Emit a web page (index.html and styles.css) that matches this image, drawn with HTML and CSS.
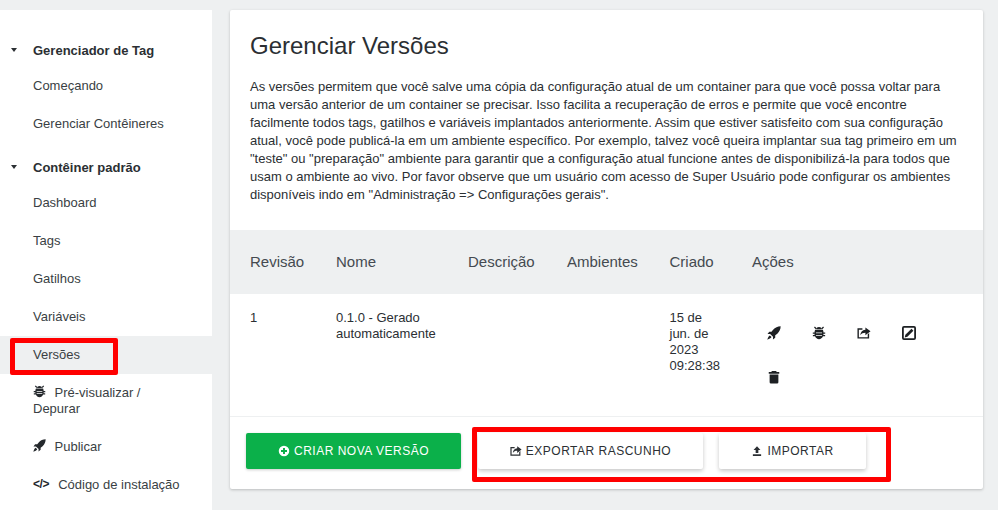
FILE: index.html
```html
<!DOCTYPE html>
<html lang="pt">
<head>
<meta charset="utf-8">
<title>Gerenciar Versões</title>
<link rel="stylesheet" href="styles.css">
</head>
<body>
<svg class="defs" width="0" height="0" aria-hidden="true">
  <symbol id="i-rocket" viewBox="0 0 16 16"><path d="M15.6.4C12.2.5 9.3 1.700 7 4.200 6.300 5 5.700 5.800 5.200 6.500H2.600L.6 9.200l3-.1 3.300 3.300-.1 2.900 2.600-2V10.700c.8-.5 1.600-1.100 2.400-1.800 2.500-2.300 3.700-5.100 3.800-8.500zM3.300 10.800C2 11.300 1 13.500.4 15.600 2.500 15 4.700 14 5.200 12.700z"/></symbol>
  <symbol id="i-bug" viewBox="0 0 16 16"><path d="M5 3.700C5 2.100 6.300 1.100 8 1.100s3 1 3 2.600zM2.300 1.600l1-1 2 2-1 1zM13.700 1.600l-1-1-2 2 1 1z"/><path d="M3.600 4.400h8.800c.5 1 .7 2 .7 3h2v1.400h-2c0 .6 0 1-.1 1.500h2v1.400h-2.500C11.800 13.500 10 15.200 8 15.200s-3.800-1.700-4.500-3.500H1v-1.400h2c-.1-.5-.1-.9-.1-1.500h-2V7.400h2c0-1 .2-2 .7-3zM4.500 7.400v.8h7v-.8zM4.500 10.300v.8h7v-.8z" fill-rule="evenodd"/></symbol>
  <symbol id="i-share" viewBox="1 2 15 13"><path d="M2.500 3.500h4.300v1.500H3v8h9.500V9.800l1.500-1.200v5.900H1.500v-11z"/><path d="M10 2.500l5.500 4.200L10 10.900V8.300C7.500 8.300 5.800 9 4.600 11c0-3.500 2-5.800 5.400-6z"/></symbol>
  <symbol id="i-edit" viewBox="1 1 14 14"><path d="M3 1h10a2 2 0 0 1 2 2v10a2 2 0 0 1-2 2H3a2 2 0 0 1-2-2V3a2 2 0 0 1 2-2zm0 1.800a.3.3 0 0 0-.2.2v10c0 .1.100.2.200.2h10c.1 0 .2-.1.200-.2V3a.3.3 0 0 0-.2-.2z" fill-rule="evenodd"/><path d="M10.500 3.800l1.900 1.900-6 6-2.700.7.700-2.700z"/></symbol>
  <symbol id="i-trash" viewBox="0 0 16 16"><path d="M5.500 1h5l.5 1.300h3v1.900H2V2.300h3zM3 5.200h10V14a1.500 1.500 0 0 1-1.500 1.500h-7A1.500 1.500 0 0 1 3 14z"/></symbol>
  <symbol id="i-plus" viewBox="0 0 16 16"><path d="M8 1a7 7 0 1 0 0 14A7 7 0 0 0 8 1zm-1.300 3h2.600v2.700H12v2.600H9.300V12H6.700V9.300H4V6.700h2.700z" fill-rule="evenodd"/></symbol>
  <symbol id="i-upload" viewBox="0 0 16 16"><path d="M8 1.500l4.600 5H9.800v4.300H6.200V6.500H3.400zM2.500 12.300h11v2.200h-11z"/></symbol>
</svg>

<div class="layout">
  <nav class="sidebar">
    <div class="nav-head"><span class="caret"></span>Gerenciador de Tag</div>
    <a class="nav-item">Começando</a>
    <a class="nav-item">Gerenciar Contêineres</a>
    <div class="nav-head nav-head-second"><span class="caret"></span>Contêiner padrão</div>
    <a class="nav-item">Dashboard</a>
    <a class="nav-item">Tags</a>
    <a class="nav-item">Gatilhos</a>
    <a class="nav-item">Variáveis</a>
    <a class="nav-item nav-active">Versões<span class="mark mark-nav"></span></a>
    <a class="nav-item nav-wrap"><svg class="nav-icon"><use href="#i-bug"/></svg>Pré-visualizar / Depurar</a>
    <a class="nav-item"><svg class="nav-icon"><use href="#i-rocket"/></svg>Publicar</a>
    <a class="nav-item"><span class="code-icon">&lt;/&gt;</span>Código de instalação</a>
  </nav>

  <main class="card">
    <div class="intro">
      <h1>Gerenciar Versões</h1>
      <p>As versões permitem que você salve uma cópia da configuração atual de um container para que você possa voltar para uma versão anterior de um container se precisar. Isso facilita a recuperação de erros e permite que você encontre facilmente todos tags, gatilhos e variáveis implantados anteriormente. Assim que estiver satisfeito com sua configuração atual, você pode publicá-la em um ambiente específico. Por exemplo, talvez você queira implantar sua tag primeiro em um "teste" ou "preparação" ambiente para garantir que a configuração atual funcione antes de disponibilizá-la para todos que usam o ambiente ao vivo. Por favor observe que um usuário com acesso de Super Usuário pode configurar os ambientes disponíveis indo em "Administração =&gt; Configurações gerais".</p>
    </div>

    <div class="grid grid-head">
      <div>Revisão</div><div>Nome</div><div>Descrição</div><div>Ambientes</div><div>Criado</div><div>Ações</div>
    </div>
    <div class="grid grid-row">
      <div>1</div>
      <div>0.1.0 - Gerado automaticamente</div>
      <div></div>
      <div></div>
      <div class="created">15 de jun. de 2023 09:28:38</div>
      <div class="actions">
        <svg class="act"><use href="#i-rocket"/></svg>
        <svg class="act"><use href="#i-bug"/></svg>
        <svg class="act"><use href="#i-share"/></svg>
        <svg class="act"><use href="#i-edit"/></svg>
        <svg class="act"><use href="#i-trash"/></svg>
      </div>
    </div>

    <div class="footer">
      <button class="btn btn-green"><svg class="btn-icon"><use href="#i-plus"/></svg>CRIAR NOVA VERSÃO</button>
      <div class="btn-group">
        <button class="btn btn-white btn-export"><svg class="btn-icon"><use href="#i-share"/></svg>EXPORTAR RASCUNHO</button>
        <button class="btn btn-white btn-import"><svg class="btn-icon"><use href="#i-upload"/></svg>IMPORTAR</button>
        <span class="mark mark-group"></span>
      </div>
    </div>
  </main>
</div>
</body>
</html>
```

FILE: styles.css
```css
* { box-sizing: border-box; }
html, body { height: 100%; }
body {
  margin: 0;
  background: #eef0f1;
  color: #2b2f33;
  font-family: "Liberation Sans", Arial, sans-serif;
  font-size: 13px;
  overflow: hidden;
}
.defs { position: absolute; }
.layout {
  display: flex;
  align-items: flex-start;
  gap: 18px;
  padding-top: 10px;
}
.sidebar {
  width: 212px;
  height: 500px;
  flex: none;
  background: #fff;
  padding-top: 24px;
}
.nav-head {
  position: relative;
  padding-left: 33px;
  height: 33px;
  line-height: 34px;
  font-weight: 700;
  color: #2b2f33;
}
.nav-head-second { margin-top: 8px; }
.caret {
  position: absolute;
  left: 11px;
  top: 14px;
  border-left: 3px solid transparent;
  border-right: 3px solid transparent;
  border-top: 4px solid #2b2f33;
}
.nav-item {
  position: relative;
  display: block;
  padding: 11px 60px 11px 33px;
  line-height: 16px;
  color: #3a3f44;
  white-space: nowrap;
}
.nav-wrap { white-space: normal; padding-right: 50px; }
.nav-active { background: #eef0f1; }
.nav-icon {
  width: 13px;
  height: 13px;
  margin-right: 8.5px;
  vertical-align: -1px;
  fill: #24282c;
}
.code-icon {
  font-weight: 700;
  font-size: 12px;
  letter-spacing: -0.4px;
  margin-right: 9px;
  color: #24282c;
  position: relative;
  top: -1px;
}
.mark {
  position: absolute;
  border: 5px solid #f00;
  border-radius: 2px;
  pointer-events: none;
}
.mark-nav { left: 10px; top: 2px; width: 108px; height: 37px; }
.card {
  width: 753px;
  height: 479px;
  flex: none;
  background: #fff;
  border-radius: 2px;
  box-shadow: 0 1px 3px rgba(0, 0, 0, .22);
  display: flex;
  flex-direction: column;
}
.intro { padding: 20px 20px 0; height: 220px; }
h1 {
  margin: 0 0 16px;
  font-size: 24px;
  font-weight: 400;
  line-height: 32px;
  color: #2b2f33;
}
.intro p {
  margin: 0;
  line-height: 18px;
  color: #2b2f33;
}
.grid {
  display: grid;
  grid-template-columns: 86px 132px 99px 102.5px 82.5px 1fr;
  padding-left: 20px;
}
.grid-head {
  height: 64px;
  padding-bottom: 2px;
  background: #eef0f1;
  align-items: center;
  font-size: 15px;
  color: #444a50;
}
.grid-row {
  height: 123px;
  padding-top: 16px;
  line-height: 16px;
  border-bottom: 1px solid #eef0f1;
  color: #2b2f33;
}
.grid-row > div { padding-right: 20px; }
.grid-row > .created { padding-right: 28px; }
.grid-row > .actions {
  display: flex;
  flex-wrap: wrap;
  gap: 30px 31px;
  padding: 16px 60px 0 15px;
  align-content: flex-start;
}
.act { width: 14px; height: 14px; fill: #1d2023; }
.footer {
  display: flex;
  align-items: flex-start;
  padding: 16px 0 0 16px;
  gap: 17px;
}
.btn {
  height: 36px;
  border: 0;
  border-radius: 2px;
  font-family: inherit;
  font-size: 12px;
  letter-spacing: .5px;
  display: inline-flex;
  align-items: center;
  justify-content: center;
  padding: 0;
}
.btn-green { width: 215px; background: #0bb04a; color: #fff; box-shadow: 0 1px 3px rgba(0,0,0,.2); fill: #fff; }
.btn-white { background: #fff; color: #2b2f33; box-shadow: 0 2px 4px rgba(0,0,0,.22); fill: #2b2f33; }
.btn-export { width: 225px; }
.btn-import { width: 147px; }
.btn-icon { width: 12px; height: 12px; margin-right: 4px; flex: none; fill: inherit; }
.btn-group {
  position: relative;
  display: flex;
  gap: 16px;
}
.mark-group { left: -6px; top: -6px; width: 419px; height: 55px; }
```
